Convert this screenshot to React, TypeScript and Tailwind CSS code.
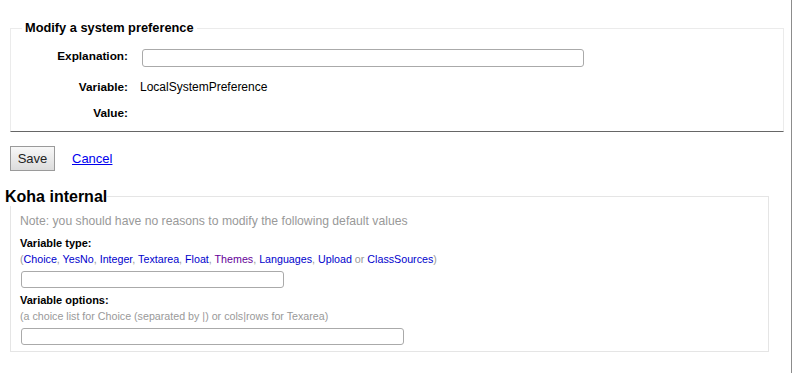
import React from "react";

const Link = ({ children, visited }: { children: React.ReactNode; visited?: boolean }) => (
  <a className={visited ? "text-[#660099] no-underline" : "text-[#0000cc] no-underline"} href="#">
    {children}
  </a>
);

export default function App() {
  return (
    <div className="w-[792px] h-[373px] border-r border-[#8c8c8c] bg-white font-['Liberation_Sans',Arial,sans-serif] text-black flex flex-col items-start">
      {/* Section 1 */}
      <div className="relative z-10 mt-[20px] ml-[22px] px-[3px] bg-white text-[12.8px] leading-[16px] font-bold">
        Modify a system preference
      </div>
      <div className="-mt-[8px] ml-[10px] w-[774px] border border-[#ebebeb] border-b-[#666] pt-[19px] pb-[10px]">
        <div className="flex items-start">
          <div className="w-[117px] text-right text-[11.8px] leading-[16px] font-bold">Explanation:</div>
          <input
            type="text"
            className="ml-[14px] mt-[1px] w-[442px] h-[18px] border border-[#aaa] rounded-[3px] bg-white outline-none"
          />
        </div>
        <div className="flex items-start mt-[12px]">
          <div className="w-[117px] text-right text-[11.8px] leading-[16px] font-bold">Variable:</div>
          <div className="ml-[12px] text-[12px] leading-[16px]">LocalSystemPreference</div>
        </div>
        <div className="flex items-start mt-[10px]">
          <div className="w-[117px] text-right text-[11.8px] leading-[16px] font-bold">Value:</div>
        </div>
      </div>

      {/* Actions */}
      <div className="flex items-center mt-[14px] ml-[10px]">
        <button className="h-[25px] w-[45px] border border-[#9a9a9a] bg-gradient-to-b from-[#f8f8f8] to-[#dcdcdc] text-[13px] text-[#222] leading-[16px]">
          Save
        </button>
        <a href="#" className="ml-[17px] text-[13px] leading-[16px] text-[#0000ee] underline">
          Cancel
        </a>
      </div>

      {/* Section 2 */}
      <div className="relative z-10 mt-[16px] ml-[5px] bg-white text-[16px] leading-[19px] font-bold">
        Koha internal
      </div>
      <div className="-mt-[10px] ml-[10px] w-[759px] border border-[#e5e5e5] pt-[16px] pl-[9px] pb-[6px]">
        <div className="text-[12.2px] leading-[16px] text-[#999]">
          Note: you should have no reasons to modify the following default values
        </div>
        <div className="mt-[7px] text-[11px] leading-[14px] font-bold">Variable type:</div>
        <div className="mt-[2px] text-[10.7px] leading-[14px] text-[#999]">
          (<Link>Choice</Link>, <Link>YesNo</Link>, <Link>Integer</Link>, <Link>Textarea</Link>,{" "}
          <Link>Float</Link>, <Link visited>Themes</Link>, <Link>Languages</Link>, <Link>Upload</Link> or{" "}
          <Link>ClassSources</Link>)
        </div>
        <input
          type="text"
          className="block mt-[5px] ml-[1px] w-[263px] h-[17px] border border-[#aaa] rounded-[3px] bg-white outline-none"
        />
        <div className="mt-[5px] text-[11px] leading-[14px] font-bold">Variable options:</div>
        <div className="mt-[2px] text-[10.7px] leading-[14px] text-[#999]">
          (a choice list for Choice (separated by |) or cols|rows for Texarea)
        </div>
        <input
          type="text"
          className="block mt-[5px] ml-[1px] w-[383px] h-[17px] border border-[#aaa] rounded-[3px] bg-white outline-none"
        />
      </div>
    </div>
  );
}
